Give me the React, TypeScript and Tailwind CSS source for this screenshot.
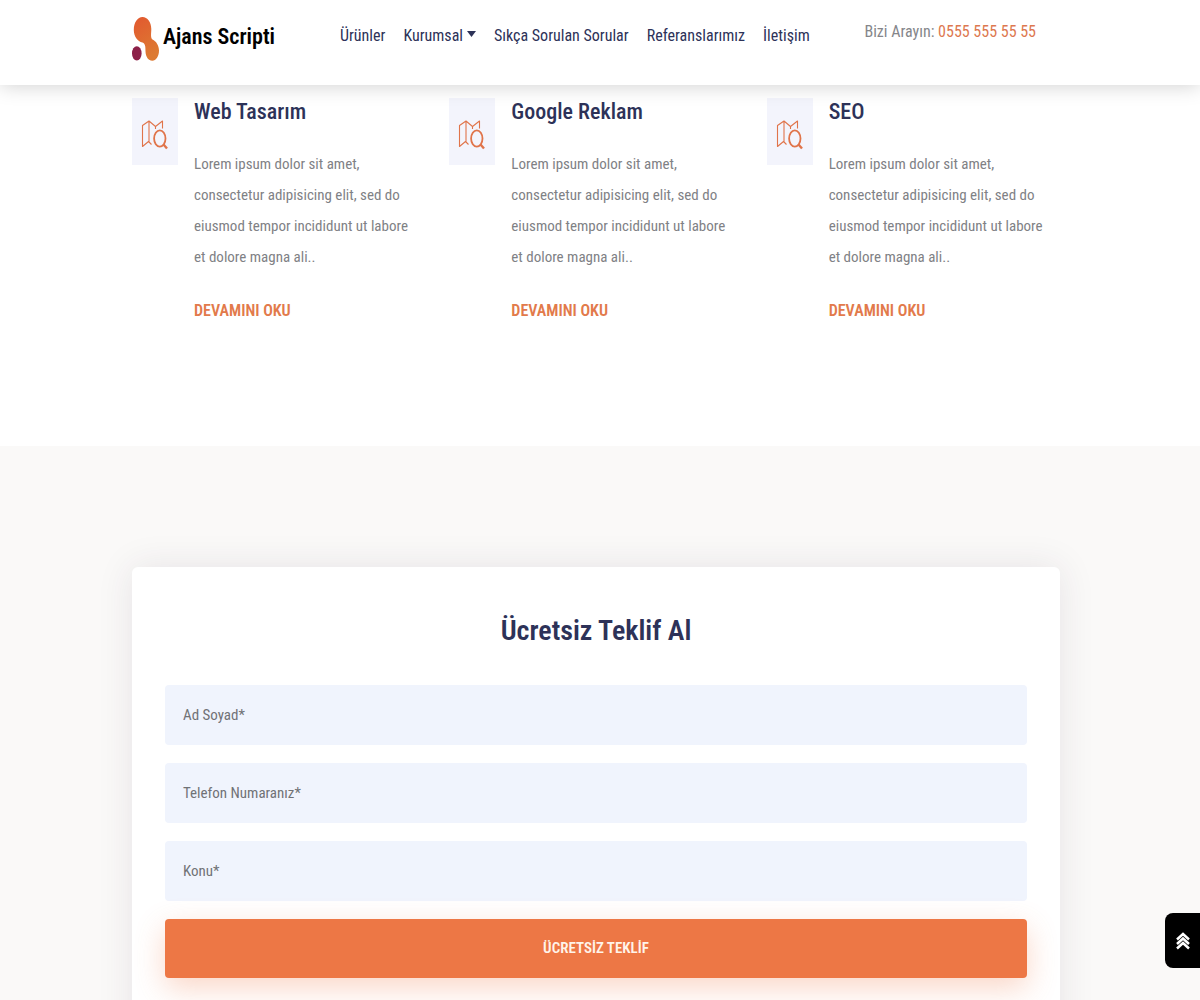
import React from "react";

const services = ["Web Tasarım", "Google Reklam", "SEO"];

const fields = [
  { id: "name", label: "Ad Soyad*", type: "text" },
  { id: "phone", label: "Telefon Numaranız*", type: "tel" },
  { id: "subject", label: "Konu*", type: "text" },
];

export default function App() {
  return (
    <div className="min-h-screen bg-white font-['Roboto_Condensed','Roboto',sans-serif] text-[#2d3258]">
      <Header />
      <main>
        <Services />
        <OfferForm />
      </main>
      <BackToTop />
    </div>
  );
}

// ── shared centered column ──
function Container({ children, className }: { children: React.ReactNode; className?: string }) {
  return (
    <div className="pr-2">
      <div className={`mx-auto w-full max-w-[928px] ${className || ""}`}>{children}</div>
    </div>
  );
}

function Header() {
  return (
    <header className="sticky top-0 z-20 bg-white shadow-[0_0_20px_rgba(0,0,0,0.2)]">
      <Container className="flex h-[85px] items-start">
        <a href="#" className="flex w-[208px] shrink-0 items-start gap-1 pt-4 text-black">
          <LogoMark />
          <span className="text-[22px] leading-[42px] font-semibold">Ajans Scripti</span>
        </a>
        <nav className="flex gap-[18px] pt-6 text-[16px] leading-6 whitespace-nowrap">
          <a href="#urunler">Ürünler</a>
          <a href="#kurumsal" className="flex items-center gap-1">
            Kurumsal
            <svg width="9" height="6" viewBox="0 0 9 6" fill="currentColor" className="mb-1" aria-hidden="true">
              <path d="M0 0h9L4.500 6z" />
            </svg>
          </a>
          <a href="#sorular">Sıkça Sorulan Sorular</a>
          <a href="#referanslar">Referanslarımız</a>
          <a href="#iletisim">İletişim</a>
        </nav>
        <p className="ml-auto pt-5 pr-6 text-[16px] leading-6 whitespace-nowrap text-[#85868a]">
          Bizi Arayın:{" "}
          <a href="tel:05555555555" className="text-[#dd7850]">0555 555 55 55</a>
        </p>
      </Container>
    </header>
  );
}

function LogoMark() {
  return (
    <svg width="27" height="46" viewBox="0 0 27 46" aria-hidden="true">
      <defs>
        <linearGradient id="logo" x1="0" y1="0" x2="0.4" y2="1">
          <stop offset="0" stopColor="#e2582f" />
          <stop offset="1" stopColor="#dd7a32" />
        </linearGradient>
      </defs>
      <path
        fill="url(#logo)"
        d="M10.500 1C15.500 1 19.300 6 19.300 13C19.300 17.500 18.300 21.500 20.500 23.500C24 25 27 29.500 27 34.500C27 40.500 24 44.700 20.300 44.700C16.500 44.700 13.700 41 13.500 35.500C13.400 30.500 13.500 28 10.500 26.500C5.500 25.500 1.800 20.500 1.800 14C1.800 6.500 5.500 1 10.500 1Z"
      />
      <ellipse cx="4.800" cy="37.400" rx="4.800" ry="7.200" fill="#8c2048" />
    </svg>
  );
}

function Services() {
  return (
    <section>
      <Container className="grid h-[361px] grid-cols-3 gap-6 pt-[13px]">
        {services.map((title) => (
          <article key={title} className="flex items-start gap-4">
            <div className="flex h-[67px] w-[46px] shrink-0 items-center justify-center bg-[#f3f4fc] pt-1.5">
              <MapSearchIcon />
            </div>
            <div>
              <h3 className="text-[22px] leading-7 font-medium">{title}</h3>
              <p className="mt-[23px] w-[225px] text-[15px] leading-[31px] text-[#808185]">
                Lorem ipsum dolor sit amet, consectetur adipisicing elit, sed do eiusmod tempor incididunt ut labore et
                dolore magna ali..
              </p>
              <a href="#" className="mt-6 block text-[16px] leading-7 font-semibold text-[#e27a4b]">
                DEVAMINI OKU
              </a>
            </div>
          </article>
        ))}
      </Container>
    </section>
  );
}

function MapSearchIcon() {
  return (
    <svg width="28" height="30" viewBox="0 0 28 30" fill="none" stroke="#e0744a" aria-hidden="true">
      <path
        strokeWidth="1.100"
        strokeLinejoin="round"
        d="M10.500 24.500L7.500 21.500L1.500 26.500V5.500L8 1L14.500 6.500L21.500 1V8.500M8 1V21.500M14.500 6.500V9"
      />
      <ellipse cx="18.800" cy="18.500" rx="5.700" ry="8.200" strokeWidth="1.800" />
      <path strokeWidth="2.400" d="M22.500 24.500L26 28.500" />
    </svg>
  );
}

function OfferForm() {
  return (
    <section className="bg-[#faf9f8] py-[121px]">
      <Container>
        <form
          className="flex flex-col gap-[18px] rounded-md bg-white px-[33px] pt-[42px] pb-16 shadow-[0_0_36px_rgba(60,40,70,0.1)]"
          onSubmit={(e) => e.preventDefault()}
        >
          <h2 className="mb-3.5 text-center text-[28px] leading-[44px] font-semibold">Ücretsiz Teklif Al</h2>
          {fields.map((field) => (
            <input
              key={field.id}
              id={field.id}
              type={field.type}
              aria-label={field.label}
              placeholder={field.label}
              className="h-[60px] w-full rounded bg-[#f0f4fd] px-[18px] text-[15px] placeholder:text-[#707276] focus:outline-none"
            />
          ))}
          <button
            type="submit"
            className="h-[59px] rounded bg-[#ed7745] text-[15px] font-semibold text-[#fff4ea] shadow-[0_10px_30px_rgba(237,119,69,0.3)]"
          >
            ÜCRETSİZ TEKLİF
          </button>
        </form>
      </Container>
    </section>
  );
}

function BackToTop() {
  return (
    <button
      type="button"
      aria-label="Yukarı çık"
      className="fixed right-0 bottom-8 z-30 flex h-[55px] w-[35px] items-center justify-center rounded-l-lg bg-black text-white"
      onClick={() => window.scrollTo({ top: 0, behavior: "smooth" })}
    >
      <svg width="14" height="18" viewBox="0 0 14 18" fill="none" stroke="currentColor" strokeWidth="2.500" aria-hidden="true">
        <path d="M1 7.500L7 2L13 7.500M1 12L7 6.500L13 12M1 16.500L7 11L13 16.500" />
      </svg>
    </button>
  );
}
